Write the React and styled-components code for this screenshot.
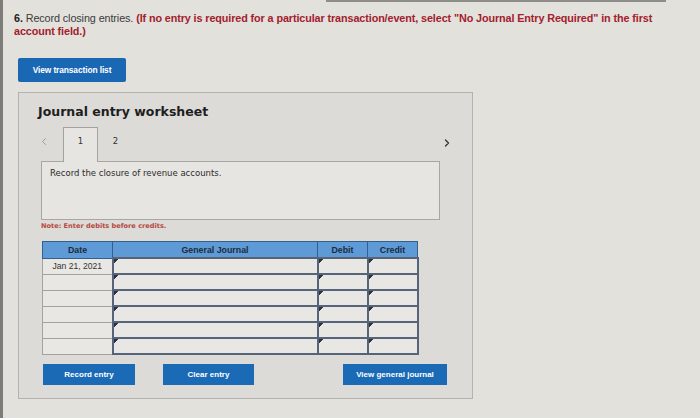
import React from "react";
import styled, { createGlobalStyle } from "styled-components";
import { ChevronLeft, ChevronRight } from "lucide-react";

const GlobalStyle = createGlobalStyle`
  html, body {
    margin: 0;
    padding: 0;
    background: #e2e1dc;
  }
  body {
    font-family: "Liberation Sans", Arial, sans-serif;
  }
`;

const rows = ["Jan 21, 2021", "", "", "", "", ""];

export default function App() {
  return (
    <>
      <GlobalStyle />
      <Page>
        <TopEdge />
        <Question>
          <b>6.</b> Record closing entries. <Red>(If no entry is required for a particular transaction/event, select "No Journal Entry Required" in the first</Red>
          <br />
          <Red>account field.)</Red>
        </Question>
        <ListButton>View transaction list</ListButton>
        <Panel>
          <Title>Journal entry worksheet</Title>
          <TabRow>
            <Arrow $dim>
              <ChevronLeft size={13} strokeWidth={1.6} />
            </Arrow>
            <Tab $active>1</Tab>
            <Tab>2</Tab>
            <Arrow $right>
              <ChevronRight size={12} strokeWidth={2.6} />
            </Arrow>
          </TabRow>
          <Prompt>Record the closure of revenue accounts.</Prompt>
          <Note>Note: Enter debits before credits.</Note>
          <Table>
            <colgroup>
              <col width="70" />
              <col width="205" />
              <col width="50" />
              <col width="50" />
            </colgroup>
            <thead>
              <tr>
                <HeadCell>Date</HeadCell>
                <HeadCell>General Journal</HeadCell>
                <HeadCell>Debit</HeadCell>
                <HeadCell>Credit</HeadCell>
              </tr>
            </thead>
            <tbody>
              {rows.map((d, i) => (
                <tr key={i}>
                  <DateCell>{d}</DateCell>
                  <EntryCell />
                  <EntryCell />
                  <EntryCell />
                </tr>
              ))}
            </tbody>
          </Table>
          <ButtonRow>
            <ActionButton $w={92}>Record entry</ActionButton>
            <ActionButton $w={91}>Clear entry</ActionButton>
            <ActionButton $w={104} $push>View general journal</ActionButton>
          </ButtonRow>
        </Panel>
      </Page>
    </>
  );
}

const Page = styled.div`
  width: 700px;
  height: 418px;
  box-sizing: border-box;
  border-left: 3px solid #7d7c78;
  padding-left: 11px;
  overflow: hidden;
  display: flex;
  flex-direction: column;
  align-items: flex-start;
`;
const TopEdge = styled.div`
  width: 340px;
  height: 2px;
  margin-left: 312px;
  background: #8e8d89;
`;
const Question = styled.div`
  margin-top: 10px;
  font-size: 10.8px;
  line-height: 13px;
  color: #3b3b3b;
  letter-spacing: -0.1px;
  white-space: nowrap;
  b {
    color: #222;
  }
`;
const Red = styled.span`
  color: #a3202c;
  font-weight: bold;
`;
const ListButton = styled.button`
  margin: 20px 0 0 4px;
  width: 108px;
  height: 24px;
  border: none;
  border-radius: 2px;
  background: #1a68b4;
  color: #fff;
  font-family: "Liberation Sans", Arial, sans-serif;
  font-weight: bold;
  font-size: 8.4px;
  letter-spacing: -0.1px;
  padding: 0;
`;
const Panel = styled.div`
  margin: 10px 0 0 4px;
  width: 455px;
  height: 307px;
  box-sizing: border-box;
  border: 1px solid #b3b2ae;
  background: #dcdbd7;
  padding: 11px 0 0 19px;
  display: flex;
  flex-direction: column;
  align-items: flex-start;
`;
const Title = styled.div`
  font-family: "DejaVu Sans", Verdana, sans-serif;
  font-weight: bold;
  font-size: 12.5px;
  line-height: 16px;
  color: #1e1e1e;
`;
const TabRow = styled.div`
  margin-top: 7px;
  width: 415px;
  height: 34px;
  display: flex;
  align-items: flex-start;
`;
const Arrow = styled.span`
  display: flex;
  width: 12px;
  height: 14px;
  align-items: center;
  justify-content: center;
  margin-top: ${({ $right }) => ($right ? "9px" : "7px")};
  color: ${({ $dim }) => ($dim ? "#8d8d8b" : "#333")};
  margin-left: ${({ $right }) => ($right ? "auto" : "0")};
`;
const Tab = styled.div`
  width: 35px;
  height: 35px;
  box-sizing: border-box;
  margin-left: ${({ $active }) => ($active ? "13px" : "0")};
  position: relative;
  z-index: 1;
  padding-top: 8px;
  text-align: center;
  font-family: "DejaVu Sans", Verdana, sans-serif;
  font-size: 8.5px;
  color: #333;
  background: ${({ $active }) => ($active ? "#e6e5e1" : "transparent")};
  border: 1px solid ${({ $active }) => ($active ? "#a3a29e" : "transparent")};
  border-bottom: none;
`;
const Prompt = styled.div`
  margin-left: 3px;
  width: 399px;
  height: 59px;
  box-sizing: border-box;
  border: 1px solid #a7a6a2;
  background: #e6e5e1;
  padding: 6px 8px;
  font-family: "DejaVu Sans", Verdana, sans-serif;
  font-size: 8.5px;
  color: #2b2b2b;
`;
const Note = styled.div`
  margin: 1px 0 0 3px;
  font-family: "DejaVu Sans", Verdana, sans-serif;
  font-size: 6.6px;
  font-weight: bold;
  line-height: 10px;
  color: #b6493f;
`;
const Table = styled.table`
  margin: 10px 0 0 4px;
  width: 375px;
  border-collapse: collapse;
  table-layout: fixed;
  border: 1px solid #6b6f76;
`;
const HeadCell = styled.th`
  height: 15px;
  padding: 0;
  background: #5e9ad5;
  border: 1px solid #335f8e;
  color: #1c2b3d;
  font-size: 8.8px;
  font-weight: bold;
  text-align: center;
`;
const DateCell = styled.td`
  height: 14px;
  padding: 0;
  background: #e8e7e3;
  border: 1px solid #a3a29e;
  font-size: 8.6px;
  color: #333;
  text-align: center;
`;
const EntryCell = styled.td`
  height: 14px;
  padding: 0;
  border: 2px solid #56647a;
  background: linear-gradient(135deg, #2c3440 3px, transparent 3px) no-repeat, #e8e7e3;
`;
const ButtonRow = styled.div`
  margin: 9px 0 0 5px;
  width: 404px;
  display: flex;
  gap: 28px;
`;
const ActionButton = styled.button`
  width: ${({ $w }) => $w}px;
  height: 21px;
  margin-left: ${({ $push }) => ($push ? "auto" : "0")};
  border: none;
  background: #1a6ab6;
  color: #fff;
  font-family: "Liberation Sans", Arial, sans-serif;
  font-weight: bold;
  font-size: 8px;
  padding: 0;
`;
